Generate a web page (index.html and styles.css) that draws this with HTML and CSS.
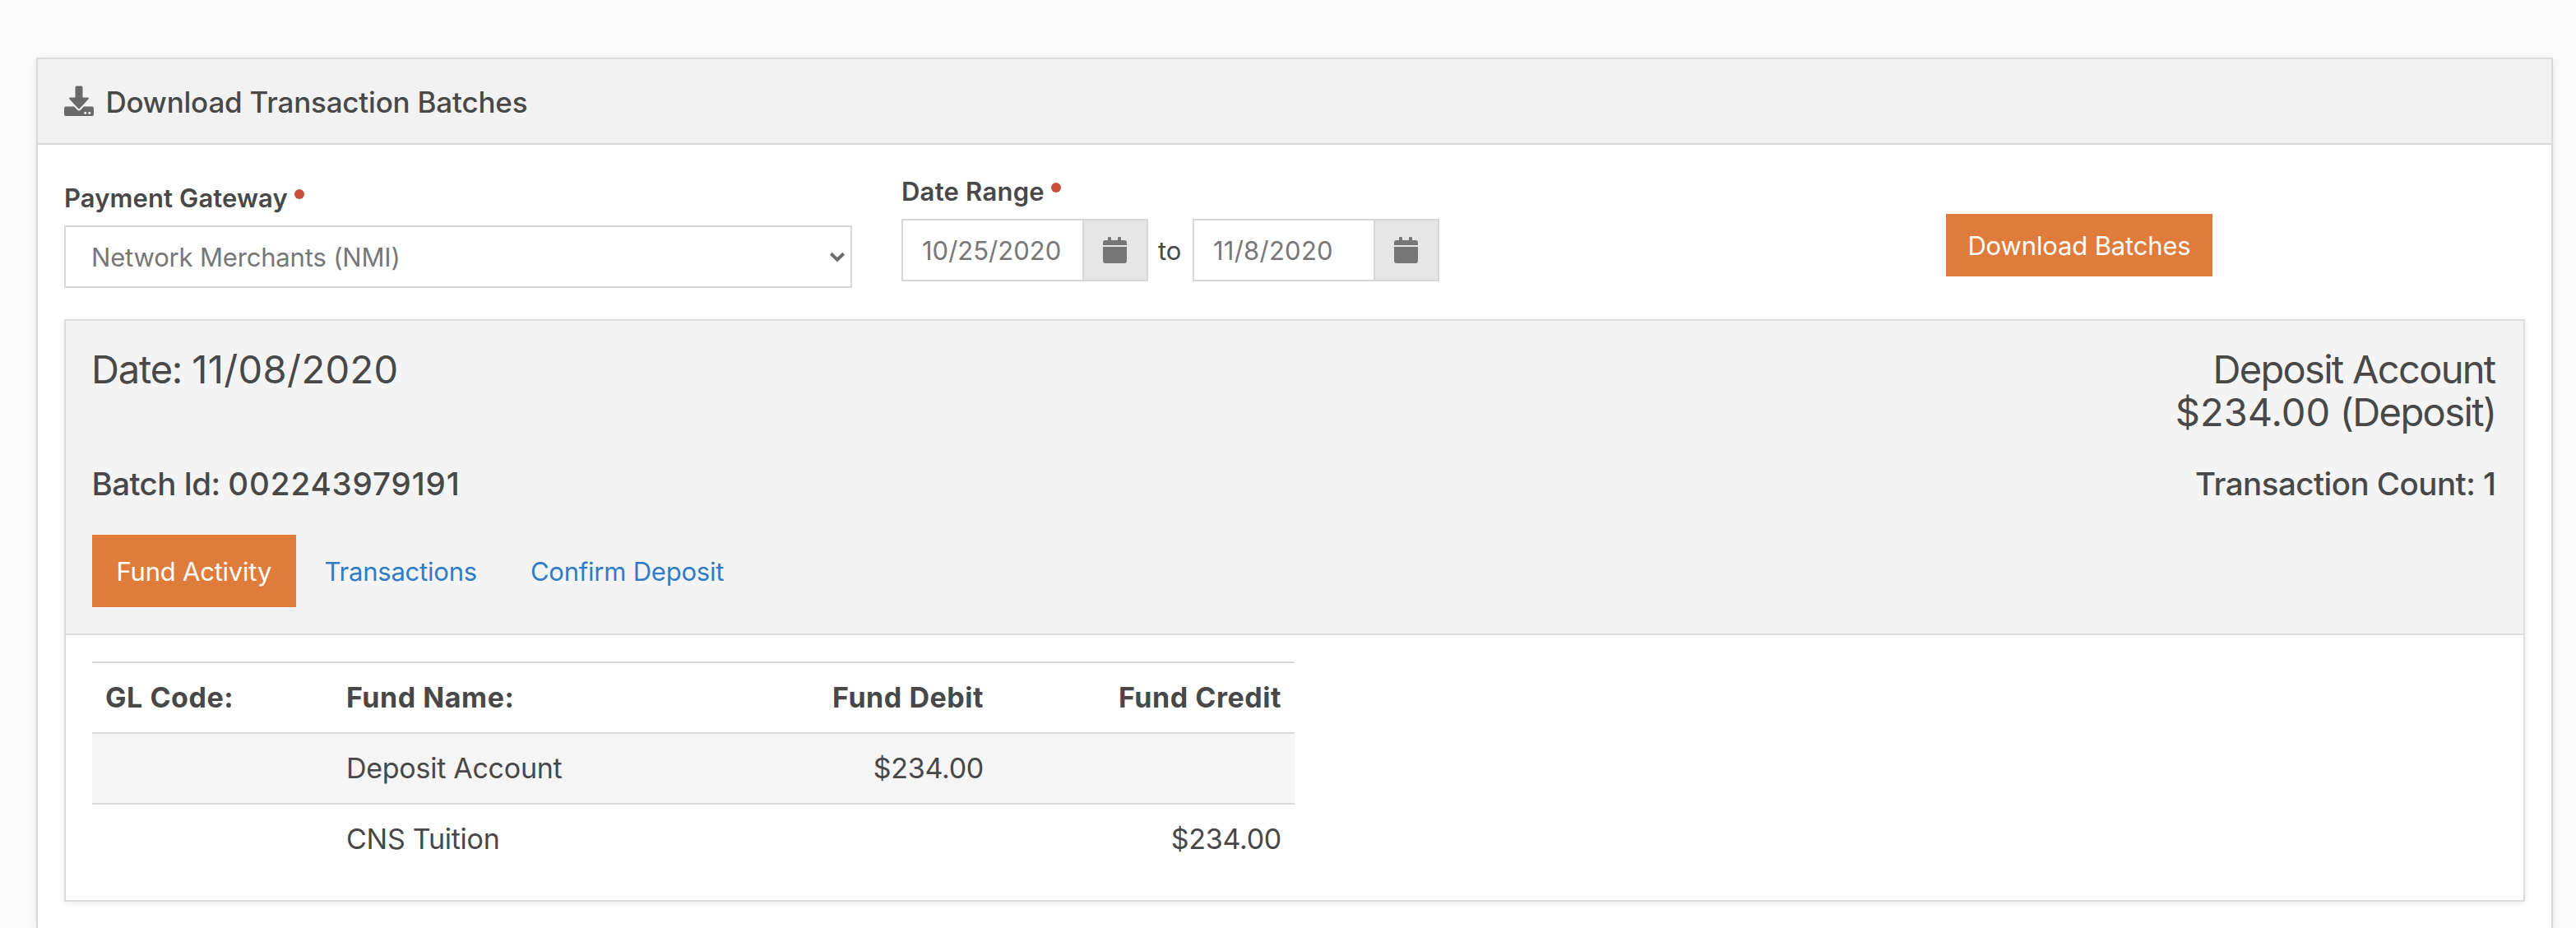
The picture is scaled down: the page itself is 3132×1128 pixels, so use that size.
FILE: index.html
```
<!DOCTYPE html>
<html lang="en">
<head>
<meta charset="utf-8">
<title>Download Transaction Batches</title>
<link rel="stylesheet" href="styles.css">
</head>
<body>
<section class="panel">
  <header class="panel-header">
    <svg class="icon-download" viewBox="0 0 36 38">
      <path d="M2 25.500H34a2 2 0 0 1 2 2V35a2 2 0 0 1-2 2H2a2 2 0 0 1-2-2V27.500a2 2 0 0 1 2-2z" />
      <path class="arrow" d="M15.300 0.500h5.400a1.800 1.800 0 0 1 1.800 1.800V14.500H29a1 1 0 0 1 .7 1.700L18.700 28a1 1 0 0 1-1.400 0L6.300 16.200A1 1 0 0 1 7 14.500h6.500V2.300a1.800 1.800 0 0 1 1.800-1.800z" />
      <circle class="led" cx="25.700" cy="33.300" r="1.500" /><circle class="led" cx="30.800" cy="33.300" r="1.500" />
    </svg>
    <h1 class="panel-title">Download Transaction Batches</h1>
  </header>
  <div class="panel-body">
    <form class="filters">
      <div class="field field-gateway">
        <label class="label" for="gateway">Payment Gateway<span class="required"></span></label>
        <div class="select-wrap">
          <select class="select" id="gateway"><option>Network Merchants (NMI)</option></select>
          <svg class="chevron" viewBox="0 0 20 14"><path d="M2.300 3.300 10 10.700l7.700-7.400" /></svg>
        </div>
      </div>
      <div class="field field-dates">
        <label class="label label-dates" for="from">Date Range<span class="required"></span></label>
        <div class="date-range">
          <div class="date-group">
            <input class="date-input date-from" id="from" type="text" value="10/25/2020">
            <span class="addon"><svg class="icon-calendar" viewBox="0 0 29 32"><path d="M0 10V7a3 3 0 0 1 3-3h3V1.200A1.200 1.200 0 0 1 7.200 0h1.600A1.200 1.200 0 0 1 10 1.200V4h8V1.200A1.200 1.200 0 0 1 19.200 0h1.600A1.200 1.200 0 0 1 22 1.200V4h4a3 3 0 0 1 3 3v3zM0 12h29v17a3 3 0 0 1-3 3H3a3 3 0 0 1-3-3z" /></svg></span>
          </div>
          <span class="to">to</span>
          <div class="date-group">
            <input class="date-input date-to" type="text" value="11/8/2020">
            <span class="addon"><svg class="icon-calendar" viewBox="0 0 29 32"><path d="M0 10V7a3 3 0 0 1 3-3h3V1.200A1.200 1.200 0 0 1 7.200 0h1.600A1.200 1.200 0 0 1 10 1.200V4h8V1.200A1.200 1.200 0 0 1 19.200 0h1.600A1.200 1.200 0 0 1 22 1.200V4h4a3 3 0 0 1 3 3v3zM0 12h29v17a3 3 0 0 1-3 3H3a3 3 0 0 1-3-3z" /></svg></span>
          </div>
        </div>
      </div>
      <button class="button" type="button">Download Batches</button>
    </form>

    <article class="batch">
      <header class="batch-header">
        <div class="batch-row">
          <h2 class="heading heading-date">Date: <span class="date-value">11/08/2020</span></h2>
          <div class="deposit">
            <h2 class="heading heading-account">Deposit Account</h2>
            <h2 class="heading heading-amount"><span class="amount-value">$234.00</span> (Deposit)</h2>
          </div>
        </div>
        <div class="batch-row batch-meta">
          <h3 class="subheading batch-id">Batch Id: <span class="id-value">002243979191</span></h3>
          <h3 class="subheading batch-count">Transaction Count: 1</h3>
        </div>
        <nav class="tabs">
          <a class="tab tab-active">Fund Activity</a>
          <a class="tab">Transactions</a>
          <a class="tab">Confirm Deposit</a>
        </nav>
      </header>
      <div class="batch-body">
        <table class="funds">
          <colgroup><col class="col-code"><col class="col-name"><col class="col-debit"><col class="col-credit"></colgroup>
          <thead>
            <tr><th>GL Code:</th><th>Fund Name:</th><th class="num">Fund Debit</th><th class="num">Fund Credit</th></tr>
          </thead>
          <tbody>
            <tr class="striped"><td></td><td>Deposit Account</td><td class="num">$234.00</td><td></td></tr>
            <tr><td></td><td>CNS Tuition</td><td></td><td class="num">$234.00</td></tr>
          </tbody>
        </table>
      </div>
    </article>
  </div>
</section>
</body>
</html>
```
FILE: styles.css
```
* {
  box-sizing: border-box;
}

body {
  margin: 0;
  height: 1128px;
  padding: 70px 28px 0 44px;
  background: #fafafa;
  color: #484848;
  font: 400 31px/40px Inter, "Liberation Sans", sans-serif;
}

h1, h2, h3 {
  margin: 0;
}

.panel {
  height: 1058px;
  border: 2px solid #dadada;
  border-bottom: 0;
  background: #fff;
  box-shadow: 0 2px 8px rgba(0, 0, 0, .08);
}

.panel-header {
  display: flex;
  align-items: center;
  height: 104px;
  padding-left: 32px;
  border-bottom: 2px solid #dadada;
  background: #f2f2f2;
}

.icon-download {
  width: 36px;
  height: 38px;
  margin-right: 14.4px;
  fill: #6a6a6a;
}

.icon-download .arrow {
  stroke: #f2f2f2;
  stroke-width: 4px;
  paint-order: stroke;
}

.icon-download .led {
  fill: #f2f2f2;
}

.panel-title {
  padding-top: 1px;
  font-size: 35px;
  font-weight: 500;
  letter-spacing: -.2px;
}

.panel-body {
  padding: 36px 32px 0;
}

/* Filter form */

.filters {
  display: grid;
  grid-template-columns: 958px 1210px 324px;
  column-gap: 60px;
  height: 176px;
  align-items: start;
}

.field-gateway {
  padding-top: 9px;
}

.field-dates {
  padding-top: 1px;
}

.label {
  display: flex;
  align-items: center;
  margin-bottom: 13px;
  font-weight: 600;
  letter-spacing: .11px;
}

.label-dates {
  letter-spacing: .23px;
}

.required {
  width: 12px;
  height: 12px;
  margin: 0 0 11px 8px;
  border-radius: 50%;
  background: #c94f38;
}

.select-wrap {
  position: relative;
}

.select {
  display: block;
  width: 100%;
  height: 76px;
  padding: 2px 31px 0;
  border: 2px solid #d8d8d8;
  border-radius: 0;
  appearance: none;
  background: #fff;
  color: #777;
  font: inherit;
  letter-spacing: -.17px;
}

.chevron {
  position: absolute;
  top: 31px;
  right: 8px;
  width: 20px;
  height: 14px;
  fill: none;
  stroke: #6c6c6c;
  stroke-width: 4px;
}

.date-range,
.date-group {
  display: flex;
}

.date-group {
  width: 300px;
  height: 76px;
  border: 2px solid #d8d8d8;
}

.date-input {
  flex: 1;
  min-width: 0;
  padding: 2px 0 0 23px;
  border: 0;
  background: #fff;
  color: #777;
  font: inherit;
}

.date-to {
  letter-spacing: .24px;
}

.addon {
  display: flex;
  align-items: center;
  width: 78px;
  padding-left: 23px;
  border-left: 2px solid #d8d8d8;
  background: #e6e6e6;
}

.icon-calendar {
  width: 29px;
  height: 32px;
  fill: #767676;
}

.to {
  width: 54px;
  padding-left: 12px;
  line-height: 77px;
}

.button {
  height: 76px;
  margin-top: 48px;
  padding: 2px 0 0;
  border: 0;
  background: #e07c3b;
  color: #fff;
  font: inherit;
  letter-spacing: -.15px;
}

/* Batch card */

.batch {
  height: 708px;
  border: 2px solid #dcdcdc;
  box-shadow: 0 2px 8px rgba(0, 0, 0, .08);
}

.batch-header {
  height: 382px;
  padding: 33px 32px 0;
  border-bottom: 2px solid #dcdcdc;
  background: #f4f4f4;
}

.batch-row {
  display: flex;
  justify-content: space-between;
}

.deposit {
  text-align: right;
}

.heading {
  font-size: 47px;
  font-weight: 400;
  line-height: 52px;
}

.heading-date {
  margin-left: -1px;
  letter-spacing: -1.2px;
}

.date-value {
  letter-spacing: .4px;
}

.heading-account {
  margin-right: 2.5px;
  letter-spacing: -1.69px;
}

.heading-amount {
  margin-right: 1.5px;
  letter-spacing: -1.6px;
}

.amount-value {
  letter-spacing: 0;
}

.batch-meta {
  margin-top: 37px;
}

.subheading {
  font-size: 38.5px;
  font-weight: 500;
  line-height: 48px;
}

.batch-id {
  margin-left: -.5px;
  letter-spacing: -.6px;
}

.id-value {
  letter-spacing: .9px;
}

.batch-count {
  margin-right: 1.5px;
  letter-spacing: -.52px;
}

.tabs {
  display: flex;
  gap: 4px;
  margin-top: 38px;
}

.tab {
  height: 88px;
  padding: 0 30.5px;
  color: #2f7cc8;
  line-height: 89px;
  letter-spacing: -.22px;
}

.tab-active {
  width: 248px;
  padding: 0 29.5px;
  background: #e07c3b;
  color: #fff;
}

.batch-body {
  padding: 32px;
}

.funds {
  width: 1462px;
  table-layout: fixed;
  border-collapse: separate;
  border-spacing: 0;
  font-size: 34px;
}

.col-code {
  width: 293px;
}

.col-name {
  width: 514px;
}

.col-debit {
  width: 293px;
}

.col-credit {
  width: 362px;
}

.funds th,
.funds td {
  height: 86px;
  padding: 0 16px;
  border-top: 2px solid #dadada;
  text-align: left;
  letter-spacing: -.27px;
}

.funds th {
  font-weight: 700;
  letter-spacing: .54px;
}

.funds .num {
  text-align: right;
}

.striped {
  background: #f5f5f5;
}
```
